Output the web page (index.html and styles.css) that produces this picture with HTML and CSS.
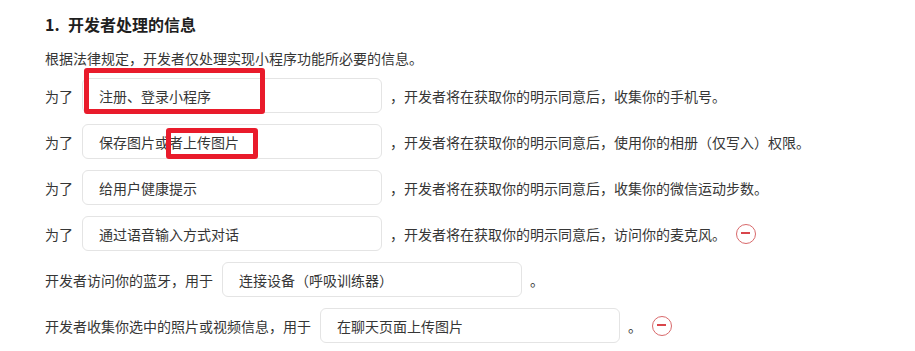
FILE: index.html
```html
<!DOCTYPE html>
<html lang="zh-CN">

<head>
    <meta charset="UTF-8">
    <meta name="viewport" content="width=device-width, initial-scale=1.0">
    <title>开发者处理的信息</title>

    <link rel="stylesheet" href="styles.css">
</head>

<body>
    <div id="contenedor">
        <h2 class="titulo"><span class="numero">1.</span>开发者处理的信息</h2>
        <p class="descripcion">根据法律规定，开发者仅处理实现小程序功能所必要的信息。</p>

        <div class="fila">
            <span class="etiqueta">为了</span>
            <div class="caja marcada">
                注册、登录小程序
                <span class="marca marca-uno"></span>
            </div>
            <span class="sufijo">，开发者将在获取你的明示同意后，收集你的手机号。</span>
        </div>

        <div class="fila">
            <span class="etiqueta">为了</span>
            <div class="caja marcada">
                保存图片或者上传图片
                <span class="marca marca-dos"></span>
            </div>
            <span class="sufijo">，开发者将在获取你的明示同意后，使用你的相册（仅写入）权限。</span>
        </div>

        <div class="fila">
            <span class="etiqueta">为了</span>
            <div class="caja">给用户健康提示</div>
            <span class="sufijo">，开发者将在获取你的明示同意后，收集你的微信运动步数。</span>
        </div>

        <div class="fila">
            <span class="etiqueta">为了</span>
            <div class="caja">通过语音输入方式对话</div>
            <span class="sufijo">，开发者将在获取你的明示同意后，访问你的麦克风。</span>
            <span class="quitar"></span>
        </div>

        <div class="fila">
            <span class="etiqueta">开发者访问你的蓝牙，用于</span>
            <div class="caja">连接设备（呼吸训练器）</div>
            <span class="sufijo">。</span>
        </div>

        <div class="fila">
            <span class="etiqueta">开发者收集你选中的照片或视频信息，用于</span>
            <div class="caja">在聊天页面上传图片</div>
            <span class="sufijo">。</span>
            <span class="quitar"></span>
        </div>
    </div>
</body>

</html>
```

FILE: styles.css
```css
body, html {
    margin: 0;
    padding: 0;
    background-color: #ffffff;
    font-family: "Noto Sans CJK SC", "Noto Sans", sans-serif;
    color: #363636;
}

#contenedor {
    padding: 13px 0 0 45px;
}

.titulo {
    margin: 0;
    font-size: 16px;
    line-height: 22px;
    font-weight: bold;
    color: #1f1f1f;
}

.numero {
    display: inline-block;
    width: 23px;
}

.descripcion {
    margin: 13px 0 10px 0;
    font-size: 14px;
    line-height: 20px;
}

.fila {
    display: flex;
    align-items: center;
    height: 35px;
    margin-bottom: 11px;
    font-size: 14px;
}

.etiqueta {
    margin-right: 9px;
    white-space: nowrap;
}

.caja {
    position: relative;
    display: flex;
    align-items: center;
    box-sizing: border-box;
    width: 300px;
    height: 35px;
    padding-left: 16px;
    border: 1px solid #e4e4e4;
    border-radius: 6px;
    background-color: #ffffff;
    white-space: nowrap;
}

.sufijo {
    margin-left: 8px;
    white-space: nowrap;
}

/* recuadros rojos de la captura */
.marca {
    position: absolute;
    box-sizing: border-box;
    border: 5px solid #e91b2b;
    border-radius: 3px;
}

.marca-uno {
    left: 1px;
    top: -11px;
    width: 181px;
    height: 46px;
}

.marca-dos {
    left: 83px;
    top: 3px;
    width: 92px;
    height: 31px;
}

.quitar {
    position: relative;
    box-sizing: border-box;
    width: 20px;
    height: 20px;
    margin-left: 10px;
    border: 1.5px solid #d9696b;
    border-radius: 50%;
}

.quitar::after {
    content: "";
    position: absolute;
    left: 4px;
    top: 7.5px;
    width: 9px;
    height: 2px;
    background-color: #d9464b;
}
```
